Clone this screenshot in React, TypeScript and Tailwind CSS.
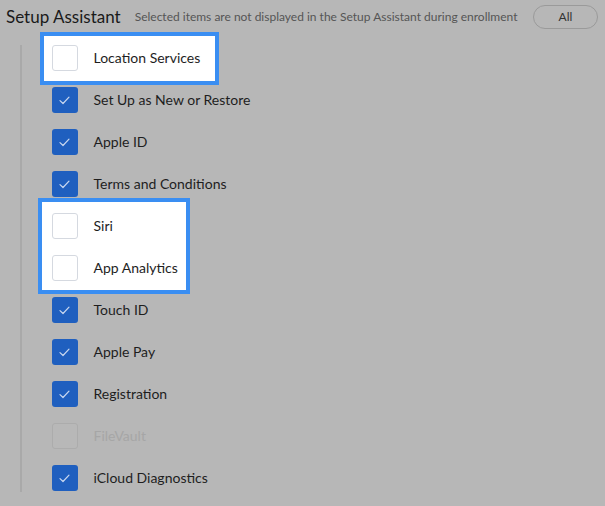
import React from "react";

type Item = { label: string; checked: boolean; disabled?: boolean };

const groupA: Item[] = [{ label: "Location Services", checked: false }];
const groupB: Item[] = [
  { label: "Set Up as New or Restore", checked: true },
  { label: "Apple ID", checked: true },
  { label: "Terms and Conditions", checked: true },
];
const groupC: Item[] = [
  { label: "Siri", checked: false },
  { label: "App Analytics", checked: false },
];
const groupD: Item[] = [
  { label: "Touch ID", checked: true },
  { label: "Apple Pay", checked: true },
  { label: "Registration", checked: true },
  { label: "FileVault", checked: false, disabled: true },
  { label: "iCloud Diagnostics", checked: true },
];

function Box({ checked, disabled }: { checked: boolean; disabled?: boolean }) {
  if (checked) {
    return (
      <div className="w-[26px] h-[26px] rounded-[3px] bg-[#1f5fbf] flex items-center justify-center shrink-0">
        <svg width="11" height="9" viewBox="0 0 11 9" fill="none">
          <path d="M1 4.6 L4 7.5 L10 1.2" stroke="#c9d8f0" strokeWidth="1.2" strokeLinecap="round" strokeLinejoin="round" />
        </svg>
      </div>
    );
  }
  return (
    <div
      className={
        disabled
          ? "w-[26px] h-[26px] rounded-[3px] border border-[#acacac] bg-[#b8b8b8] shrink-0"
          : "w-[26px] h-[26px] rounded-[3px] border border-[#d5d9e0] bg-white shrink-0"
      }
    />
  );
}

function Row({ item }: { item: Item }) {
  return (
    <div className="h-[42px] flex items-center">
      <Box checked={item.checked} disabled={item.disabled} />
      <span className={"ml-4 text-[14px] mb-[1px] " + (item.disabled ? "text-[#a6a6a6]" : "text-[#1e1e1e]")}>{item.label}</span>
    </div>
  );
}

export default function App() {
  return (
    <div className="w-[605px] h-[506px] bg-[#b7b7b7] overflow-hidden" style={{ fontFamily: "Lato, 'Open Sans', sans-serif" }}>
      <div className="h-[37px] flex items-center pl-[6px] pr-[7px]">
        <span className="text-[17px] text-[#1a1a1a] mb-[4px]">Setup Assistant</span>
        <span className="ml-[14px] text-[12px] text-[#555] mb-[3px]">Selected items are not displayed in the Setup Assistant during enrollment</span>
        <button className="ml-auto w-[65px] h-[24px] rounded-full border border-[#9a9a9a] text-[12px] text-[#333] mb-[4px]">All</button>
      </div>
      <div className="flex pl-[20px]">
        <div className="w-[1.5px] bg-[#a9a9a9] mt-[8px] mb-[7px]" />
        <div className="ml-[30px] flex flex-col">
          <div className="relative">
            <div className="absolute left-[-12px] w-[179px] top-[-5px] bottom-[-6px] bg-white border-4 border-[#3a8ef2]" />
            <div className="relative">
              {groupA.map((it) => <Row key={it.label} item={it} />)}
            </div>
          </div>
          {groupB.map((it) => <Row key={it.label} item={it} />)}
          <div className="relative">
            <div className="absolute left-[-14px] w-[152px] top-[-7px] bottom-[-5px] bg-white border-4 border-[#3a8ef2]" />
            <div className="relative">
              {groupC.map((it) => <Row key={it.label} item={it} />)}
            </div>
          </div>
          {groupD.map((it) => <Row key={it.label} item={it} />)}
        </div>
      </div>
    </div>
  );
}
